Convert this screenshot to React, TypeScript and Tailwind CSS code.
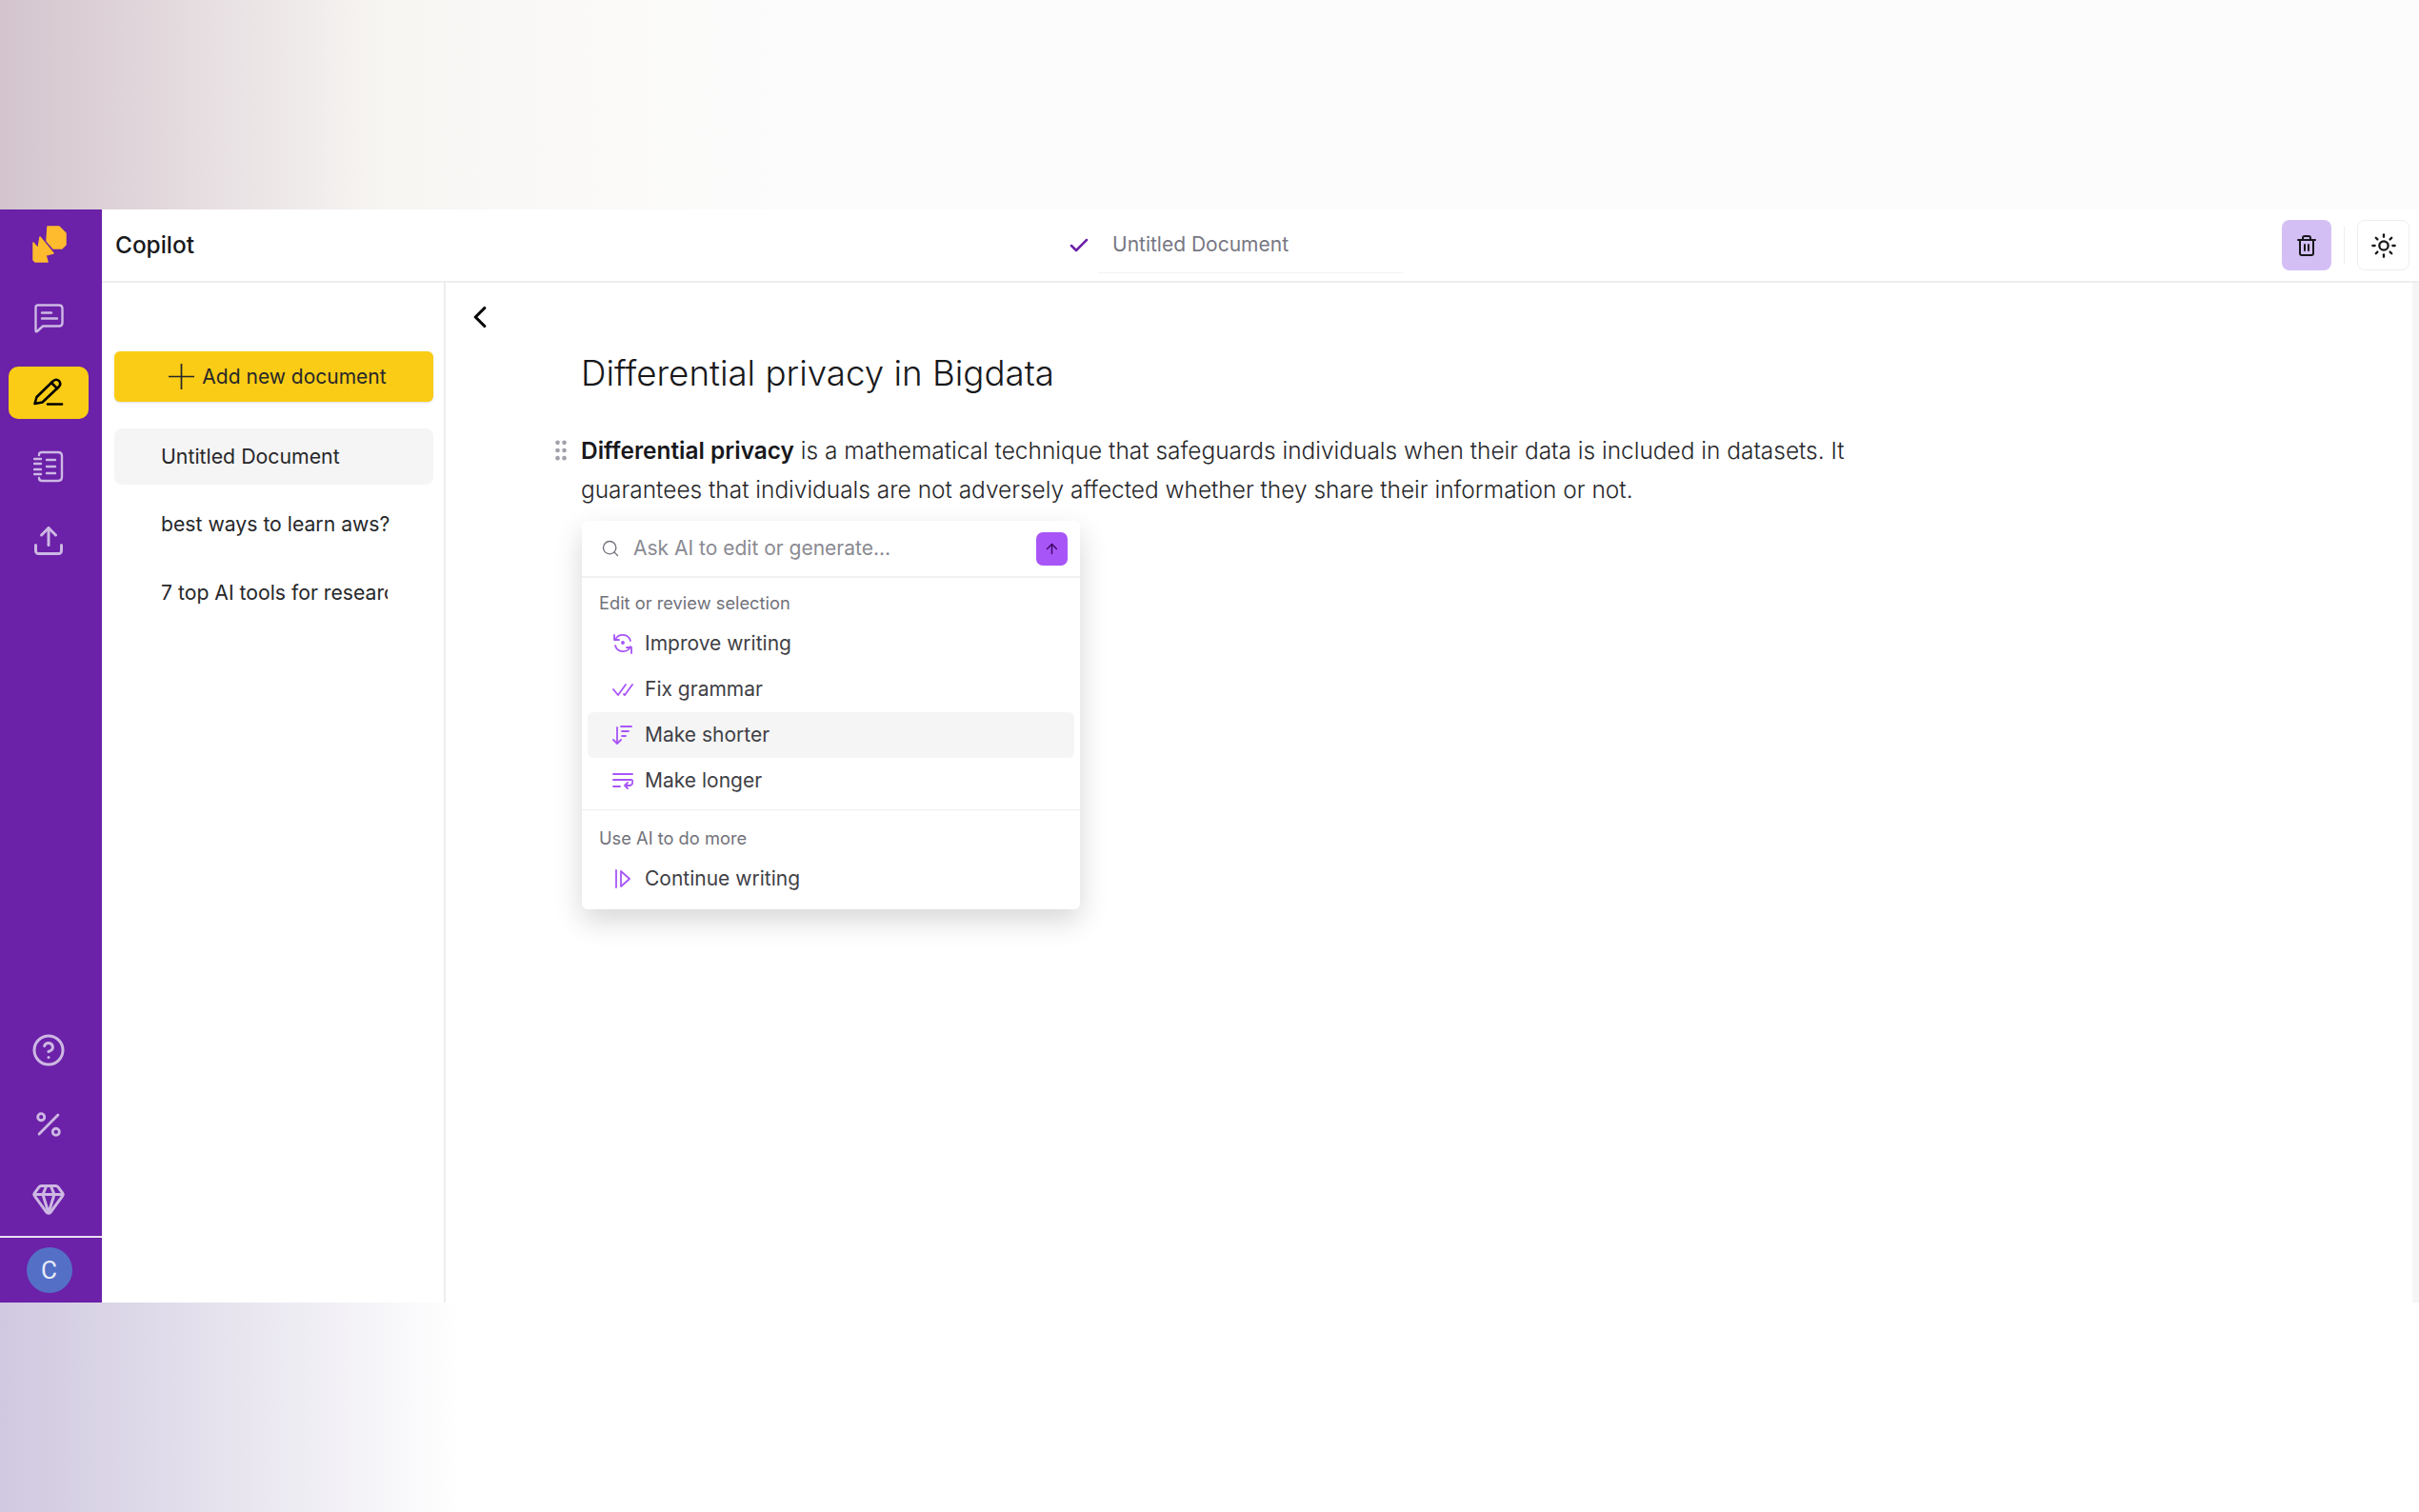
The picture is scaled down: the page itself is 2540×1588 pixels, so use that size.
import { ArrowUp, Check, ChevronLeft, Gem, GripVertical, Percent, Search, Sun, Trash2, Upload, CircleHelp } from 'lucide-react'

function Logo() {
  return (
    <svg width="38" height="41" viewBox="0 0 38 41" fill="#fdbb2d" stroke="#fdbb2d" strokeWidth="1.5" strokeLinejoin="round">
      <path d="M17 2 H29 L36 9 V21 L32 25 H23 L16 17 Z" />
      <path d="M2 19 L7 25 L9 13 L23 30 L15 32 L17 39 H4 L2 37 Z" />
    </svg>
  )
}

function ChatIcon() {
  return (
    <svg width="31" height="31" viewBox="0 0 31 31" fill="none" stroke="currentColor" strokeWidth="2.4" strokeLinecap="round" strokeLinejoin="round">
      <path d="M4 1.5 H26 Q29.5 1.5 29.5 5 V20 Q29.5 23.5 26 23.5 H9 L3 29 Q1.5 30 1.5 28 V4 Q1.5 1.5 4 1.5 Z" />
      <path d="M8 9.5 H18 M8 15.5 H24" />
    </svg>
  )
}

function PenIcon() {
  return (
    <svg width="32" height="30" viewBox="0 0 32 30" fill="none" stroke="currentColor" strokeWidth="2.6" strokeLinecap="round" strokeLinejoin="round">
      <path d="M1.5 27 L3.5 20 L21 3 Q24 0.5 27 3 Q29.5 6 27 9 L9.5 25.5 Z" />
      <path d="M19 5 L25 11" />
      <path d="M15 27.5 H30" />
    </svg>
  )
}

function NotebookIcon() {
  return (
    <svg width="32" height="34" viewBox="0 0 32 34" fill="none" stroke="currentColor" strokeWidth="2.4" strokeLinecap="round" strokeLinejoin="round">
      <path d="M6 5 C6 3 7 2 9 2 H26 C28 2 30 3 30 6 V28 C30 31 28 32 26 32 H9 C7 32 6 31 6 29" />
      <path d="M1 9 H8 M1 14 H8 M1 20 H8 M1 25 H8" />
      <path d="M14 10 H23 M14 17 H23 M14 24 H23" />
    </svg>
  )
}

function PlusIcon() {
  return (
    <svg width="27" height="27" viewBox="0 0 27 27" fill="none" stroke="#27272a" strokeWidth="1.7">
      <path d="M13.5 0 V27 M0 13.5 H27" />
    </svg>
  )
}

function ImproveIcon() {
  return (
    <svg width="22" height="22" viewBox="0 0 22 22" fill="none" stroke="#a855f7" strokeWidth="1.8" strokeLinecap="round" strokeLinejoin="round">
      <path d="M3 7 A8.5 8.5 0 0 1 19 8" />
      <path d="M2 2 V7 H7" />
      <path d="M3 13 A8.5 8.5 0 0 0 19 14" />
      <path d="M20 21 V15 H15" />
      <circle cx="11" cy="10" r="1" fill="#a855f7" />
    </svg>
  )
}

function GrammarIcon() {
  return (
    <svg width="22" height="16" viewBox="0 0 22 16" fill="none" stroke="#a855f7" strokeWidth="1.8" strokeLinecap="round" strokeLinejoin="round">
      <path d="M1 8 L6 14 L14 3" />
      <path d="M12 13 L13 14 L21 3" />
    </svg>
  )
}

function ShorterIcon() {
  return (
    <svg width="22" height="22" viewBox="0 0 22 22" fill="none" stroke="#a855f7" strokeWidth="1.8" strokeLinecap="round" strokeLinejoin="round">
      <path d="M5 3 V20 M1 16 L5 20 L9 16" />
      <path d="M9 2 H20 M10 7 H17 M10 12 H14" />
    </svg>
  )
}

function LongerIcon() {
  return (
    <svg width="22" height="18" viewBox="0 0 22 18" fill="none" stroke="#a855f7" strokeWidth="1.8" strokeLinecap="round" strokeLinejoin="round">
      <path d="M1 2 H21 M1 8 H20 C22 8 22 14 18 14 H13 M16 11 L13 14 L16 17 M1 15 H8" />
    </svg>
  )
}

function ContinueIcon() {
  return (
    <svg width="16" height="20" viewBox="0 0 16 20" fill="none" stroke="#a855f7" strokeWidth="1.8" strokeLinecap="round" strokeLinejoin="round">
      <path d="M1 1 V19" />
      <path d="M6 2 L15 10 L6 18 Z" />
    </svg>
  )
}

function MenuItem({ icon, label, active }: { icon: React.ReactNode; label: string; active?: boolean }) {
  return (
    <div className={`mx-[6px] h-[48px] flex items-center rounded-[6px] ${active ? 'bg-[#f5f5f5]' : ''}`}>
      <div className="w-[62px] pl-[11px] flex justify-center shrink-0">{icon}</div>
      <span className="ml-[-2px] text-[21px] text-[#3f3f46]">{label}</span>
    </div>
  )
}

function SideIcon({ children }: { children: React.ReactNode }) {
  return <div className="h-[78px] pr-[5px] flex items-center justify-center text-[#cdb8e3]">{children}</div>
}

export default function App() {
  return (
    <div className="w-[2540px] h-[1588px] overflow-hidden flex flex-col bg-white font-['Inter',sans-serif]">
      {/* top banner */}
      <div className="h-[220px] shrink-0 bg-gradient-to-r from-[#d3c4cd] via-[#f8f6f3] via-[16%] to-[#fcfcfc] to-[32%]" />

      {/* app window */}
      <div className="h-[1148px] shrink-0 flex">
        <aside className="w-[107px] shrink-0 bg-[#6b21a8] flex flex-col">
          <div className="h-[75px] pr-[4px] pb-[2px] flex items-center justify-center">
            <Logo />
          </div>
          <SideIcon>
            <ChatIcon />
          </SideIcon>
          <div className="h-[78px] flex items-center pl-[9px]">
            <div className="w-[84px] h-[55px] rounded-[10px] bg-[#facc15] flex items-center justify-center text-black">
              <PenIcon />
            </div>
          </div>
          <SideIcon>
            <NotebookIcon />
          </SideIcon>
          <SideIcon>
            <Upload size={36} strokeWidth={2} />
          </SideIcon>
          <div className="flex-1" />
          <SideIcon>
            <CircleHelp size={36} strokeWidth={2} />
          </SideIcon>
          <SideIcon>
            <Percent size={34} strokeWidth={2} />
          </SideIcon>
          <SideIcon>
            <Gem size={36} strokeWidth={2} />
          </SideIcon>
          <div className="h-[70px] border-t-2 border-[#e9e0f2] pr-[4px] flex items-center justify-center">
            <div className="w-[48px] h-[48px] rounded-full bg-[#5470c6] flex items-center justify-center text-[26px] text-[#e8ecf8] font-['Roboto',sans-serif]">
              C
            </div>
          </div>
        </aside>

        <div className="flex-1 flex flex-col min-w-0">
          {/* header */}
          <header className="h-[77px] shrink-0 border-b-2 border-[#eeeeee] flex items-center">
            <div className="w-[1000px] pl-[14px] text-[24.4px] font-medium text-[#18181b]">Copilot</div>
            <Check size={24} strokeWidth={2.5} className="ml-[14px] text-[#6b21a8]" />
            <div className="ml-[8px] w-[320px] h-[58px] flex items-center pl-[15px] border-b border-[#f3f3f3] text-[21px] text-[#777783]">
              Untitled Document
            </div>
            <div className="flex-1" />
            <div className="w-[52px] h-[53px] rounded-[8px] bg-[#d4bff5] flex items-center justify-center text-[#18181b]">
              <Trash2 size={24} strokeWidth={2} />
            </div>
            <div className="mx-[13px] w-px h-[40px] bg-[#eeeeee]" />
            <div className="w-[55px] h-[53px] mr-[10px] rounded-[8px] border border-[#eeeeee] flex items-center justify-center text-[#18181b]">
              <Sun size={28} strokeWidth={2} />
            </div>
          </header>

          <div className="flex-1 flex min-h-0">
            {/* document list */}
            <div className="w-[361px] shrink-0 border-r-2 border-[#eeeeee] pl-[13px] pt-[72px]">
              <button className="w-[335px] h-[53px] rounded-[6px] bg-[#facc15] shadow-sm pl-[8px] flex items-center justify-center gap-[8px] text-[21px] text-[#27272a]">
                <PlusIcon />
                Add new document
              </button>
              <div className="mt-[28px] w-[335px] h-[59px] rounded-[8px] bg-[#f5f5f5] pl-[49px] flex items-center text-[21.3px] text-[#27272a]">
                Untitled Document
              </div>
              <div className="mt-[12px] h-[60px] w-[290px] pl-[49px] pr-[3px] flex items-center text-[21.2px] text-[#27272a] overflow-hidden whitespace-nowrap">
                best ways to learn aws?
              </div>
              <div className="mt-[12px] h-[60px] w-[287px] pl-[49px] flex items-center text-[21.2px] text-[#27272a] overflow-hidden whitespace-nowrap">
                7 top AI tools for research
              </div>
            </div>

            {/* editor */}
            <main className="flex-1 relative min-w-0">
              <ChevronLeft size={38} strokeWidth={2} className="absolute left-[17px] top-[17px] text-black" />
              <div className="pl-[142px] pt-[70px] w-[1500px]">
                <h1 className="text-[36.7px] leading-[50px] font-light text-[#18181b]">Differential privacy in Bigdata</h1>
                <div className="relative mt-[36px]">
                  <GripVertical size={28} strokeWidth={2} className="absolute left-[-35px] top-[6px] text-[#a1a1aa]" />
                  <p className="text-[24.45px] leading-[41px] font-light text-[#27272a] w-[1340px]">
                    <strong className="font-semibold text-[#18181b]">Differential privacy</strong> is a mathematical
                    technique that safeguards individuals when their data is included in datasets. It guarantees that
                    individuals are not adversely affected whether they share their information or not.
                  </p>
                </div>

                {/* AI menu */}
                <div className="mt-[12px] ml-[1px] w-[523px] rounded-[6px] bg-white shadow-[0_12px_30px_rgba(0,0,0,0.16)]">
                  <div className="h-[60px] border-b-2 border-[#f1f1f1] flex items-center pl-[20px] pr-[13px]">
                    <Search size={20} strokeWidth={1.6} className="text-[#71717a]" />
                    <span className="ml-[14px] text-[21px] text-[#8a8a92]">Ask AI to edit or generate...</span>
                    <div className="flex-1" />
                    <div className="w-[33px] h-[35px] rounded-[7px] bg-[#a855f7] flex items-center justify-center text-[#3b0764]">
                      <ArrowUp size={17} strokeWidth={2} />
                    </div>
                  </div>
                  <div className="pl-[18px] pt-[13px] pb-[6px] text-[18.3px] leading-[26px] text-[#71717a]">Edit or review selection</div>
                  <MenuItem icon={<ImproveIcon />} label="Improve writing" />
                  <MenuItem icon={<GrammarIcon />} label="Fix grammar" />
                  <MenuItem icon={<ShorterIcon />} label="Make shorter" active />
                  <MenuItem icon={<LongerIcon />} label="Make longer" />
                  <div className="mt-[6px] border-t border-[#eeeeee]" />
                  <div className="pl-[18px] pt-[16px] pb-[6px] text-[18.3px] leading-[26px] text-[#71717a]">Use AI to do more</div>
                  <MenuItem icon={<ContinueIcon />} label="Continue writing" />
                  <div className="h-[8px]" />
                </div>
              </div>
              <div className="absolute right-0 top-0 bottom-0 w-[7px] bg-[#f5f5f5]" />
            </main>
          </div>
        </div>
      </div>

      {/* bottom banner */}
      <div className="h-[220px] shrink-0 bg-gradient-to-r from-[#d0c8e0] via-[#e8e5ef] via-[10%] to-[#ffffff] to-[19%]" />
    </div>
  )
}
